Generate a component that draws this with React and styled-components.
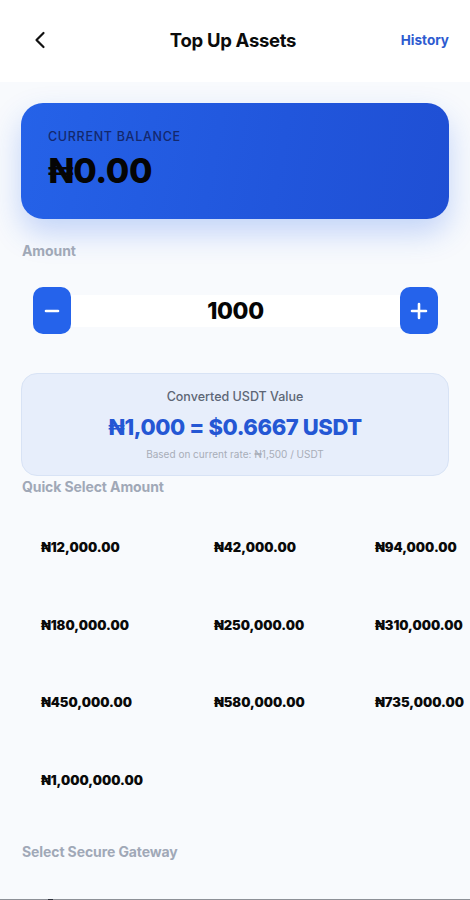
import styled, { createGlobalStyle } from "styled-components";

const GlobalStyle = createGlobalStyle`
  html, body {
    margin: 0;
    padding: 0;
    background: #f8fafd;
    font-family: "Inter", "Lato", "DejaVu Sans", sans-serif;
    overflow-x: hidden;
  }
  * { box-sizing: border-box; }
`;

const Page = styled.div`
  width: 470px;
  min-height: 900px;
  background: #f8fafd;
  overflow: hidden;
`;

const Header = styled.header`
  height: 82px;
  background: #ffffff;
  display: grid;
  grid-template-columns: 60px 1fr 80px;
  align-items: center;
  padding: 0 20px 2px 30px;
`;

const BackButton = styled.button`
  border: none;
  background: none;
  padding: 0;
  width: 20px;
  height: 20px;
  display: flex;
  align-items: center;
  justify-content: center;
  color: #111;
`;

const Title = styled.h1`
  margin: 0;
  text-align: center;
  font-size: 18.5px;
  font-weight: 700;
  color: #0b0b0b;
  letter-spacing: -0.3px;
  padding-left: 6px;
`;

const HistoryLink = styled.a`
  justify-self: end;
  font-size: 13.5px;
  font-weight: 700;
  color: #2d5bd0;
  padding-right: 1px;
`;

const Content = styled.main`
  padding: 21px 21px 0;
  display: flex;
  flex-direction: column;
`;

const BalanceCard = styled.section`
  height: 116px;
  border-radius: 22px;
  background: linear-gradient(100deg, #2562e8 0%, #2156dc 60%, #1f4fd4 100%);
  box-shadow: 0 14px 30px rgba(37, 99, 235, 0.25);
  padding: 26px 27px;
  display: flex;
  flex-direction: column;
  gap: 6px;
`;

const BalanceLabel = styled.span`
  font-size: 12.5px;
  line-height: 16px;
  letter-spacing: 0.7px;
  color: #13286e;
  font-weight: 500;
`;

const BalanceValue = styled.span`
  font-size: 34px;
  line-height: 40px;
  font-weight: 800;
  color: #050505;
  letter-spacing: -0.4px;
`;

const SectionLabel = styled.h2`
  margin: ${(p) => p.$mt || 0}px 0 0 1px;
  font-size: 14px;
  line-height: 18px;
  font-weight: 700;
  color: #a0a8b7;
  letter-spacing: -0.1px;
`;

const Stepper = styled.div`
  margin-top: 27px;
  display: flex;
  align-items: center;
  padding: 0 11px 0 12px;
`;

const StepButton = styled.button`
  width: 38px;
  height: 47px;
  border: none;
  border-radius: 10px;
  background: #2563eb;
  display: flex;
  align-items: center;
  justify-content: center;
  padding: 0;
  flex-shrink: 0;
`;

const AmountInput = styled.div`
  flex: 1;
  height: 32px;
  background: #ffffff;
  display: flex;
  align-items: center;
  justify-content: center;
  font-size: 23px;
  font-weight: 800;
  color: #050505;
  letter-spacing: -0.3px;
`;

const ConvertCard = styled.section`
  margin-top: 39px;
  height: 103px;
  border-radius: 16px;
  background: #e7eefb;
  border: 1px solid #d8e3f5;
  padding: 14px 12px;
  display: flex;
  flex-direction: column;
  align-items: center;
`;

const ConvertTitle = styled.span`
  font-size: 12.5px;
  line-height: 18px;
  color: #5d6675;
  font-weight: 500;
`;

const ConvertValue = styled.span`
  margin-top: 7px;
  font-size: 22px;
  line-height: 28px;
  font-weight: 800;
  color: #2457d4;
  letter-spacing: -0.4px;
`;

const ConvertNote = styled.span`
  margin-top: 6px;
  font-size: 10px;
  line-height: 14px;
  color: #a7adb8;
`;

const QuickGrid = styled.div`
  margin-top: 22px;
  display: grid;
  grid-template-columns: 141px 129px 127px;
  column-gap: 32px;
  row-gap: 19.5px;
`;

const QuickItem = styled.button`
  height: 58px;
  border: none;
  background: transparent;
  padding: 0 0 0 20px;
  text-align: left;
  font-family: inherit;
  font-size: 13px;
  font-weight: 900;
  color: #0a0a0a;
  white-space: nowrap;
  letter-spacing: 0px;
`;

const GatewayBar = styled.div`
  margin-top: 38px;
  height: 4px;
  border-top: 2px solid #8d9097;
  position: relative;
`;

const GatewayMark = styled.span`
  position: absolute;
  left: 48px;
  top: -2px;
  width: 5px;
  height: 2px;
  background: #2b2f3a;
`;

const quickAmounts = [
  "₦12,000.00",
  "₦42,000.00",
  "₦94,000.00",
  "₦180,000.00",
  "₦250,000.00",
  "₦310,000.00",
  "₦450,000.00",
  "₦580,000.00",
  "₦735,000.00",
  "₦1,000,000.00",
];

export default function App() {
  return (
    <Page>
      <GlobalStyle />
      <Header>
        <BackButton aria-label="Back">
          <svg width="14" height="18" viewBox="0 0 14 18" fill="none">
            <path d="M10.5 2 L3.5 9 L10.5 16" stroke="#111" strokeWidth="2.2" strokeLinecap="round" strokeLinejoin="round" />
          </svg>
        </BackButton>
        <Title>Top Up Assets</Title>
        <HistoryLink>History</HistoryLink>
      </Header>

      <Content>
        <BalanceCard>
          <BalanceLabel>CURRENT BALANCE</BalanceLabel>
          <BalanceValue>₦0.00</BalanceValue>
        </BalanceCard>

        <SectionLabel $mt={23}>Amount</SectionLabel>
        <Stepper>
          <StepButton aria-label="Decrease">
            <svg width="16" height="16" viewBox="0 0 16 16">
              <path d="M2 8 H14" stroke="#fff" strokeWidth="2.6" strokeLinecap="round" />
            </svg>
          </StepButton>
          <AmountInput>1000</AmountInput>
          <StepButton aria-label="Increase">
            <svg width="18" height="18" viewBox="0 0 18 18">
              <path d="M2 9 H16 M9 2 V16" stroke="#fff" strokeWidth="2.6" strokeLinecap="round" />
            </svg>
          </StepButton>
        </Stepper>

        <ConvertCard>
          <ConvertTitle>Converted USDT Value</ConvertTitle>
          <ConvertValue>₦1,000 = $0.6667 USDT</ConvertValue>
          <ConvertNote>Based on current rate: ₦1,500 / USDT</ConvertNote>
        </ConvertCard>

        <SectionLabel $mt={2}>Quick Select Amount</SectionLabel>
        <QuickGrid>
          {quickAmounts.map((a) => (
            <QuickItem key={a}>{a}</QuickItem>
          ))}
        </QuickGrid>

        <SectionLabel $mt={34}>Select Secure Gateway</SectionLabel>
      </Content>
      <GatewayBar>
        <GatewayMark />
      </GatewayBar>
    </Page>
  );
}
